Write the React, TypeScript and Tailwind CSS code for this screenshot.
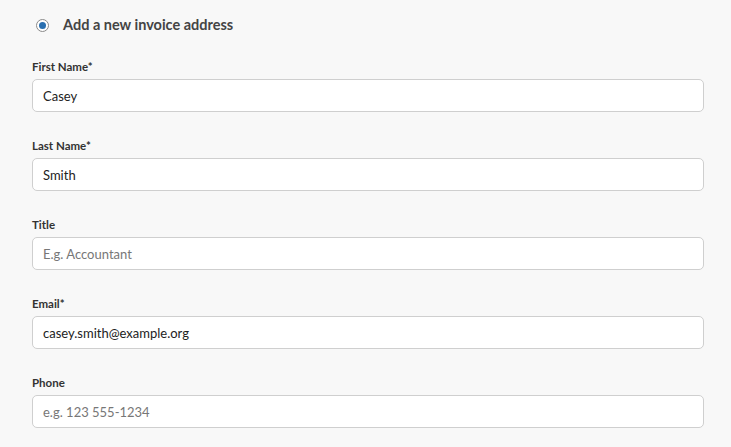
import React from 'react';

const fields = [
    { label: 'First Name*', value: 'Casey', placeholder: '' },
    { label: 'Last Name*', value: 'Smith', placeholder: '' },
    { label: 'Title', value: '', placeholder: 'E.g. Accountant' },
    { label: 'Email*', value: 'casey.smith@example.org', placeholder: '' },
    { label: 'Phone', value: '', placeholder: 'e.g. 123 555-1234' },
];

export default function App() {
    return (
        <div className="min-h-[447px] w-[731px] bg-[#f8f8f8] px-[32px] pt-[15px] font-['Lato','Open_Sans',sans-serif]">
            {/* Radio option */}
            <label className="flex h-[20px] items-center">
                <span className="ml-[4px] flex h-[13px] w-[13px] items-center justify-center rounded-full border border-[#8a8a8a] bg-white">
                    <span className="h-[7px] w-[7px] rounded-full bg-[#2a6fb0]" />
                </span>
                <span className="ml-[14px] text-[14.5px] font-bold text-[#444]">Add a new invoice address</span>
            </label>

            {/* Form fields */}
            <div className="mt-[25px] flex flex-col gap-[27px]">
                {fields.map((f) => (
                    <div key={f.label} className="flex flex-col">
                        <span className="mb-[5px] h-[14px] text-[11.5px] leading-[14px] font-bold text-[#333]">{f.label}</span>
                        <input
                            type="text"
                            readOnly
                            value={f.value}
                            placeholder={f.placeholder}
                            className="h-[33px] w-[672px] rounded-[5px] border border-[#cfcfcf] bg-white px-[10px] text-[13px] text-[#222] placeholder:text-[#777] outline-none"
                        />
                    </div>
                ))}
            </div>
        </div>
    );
}
